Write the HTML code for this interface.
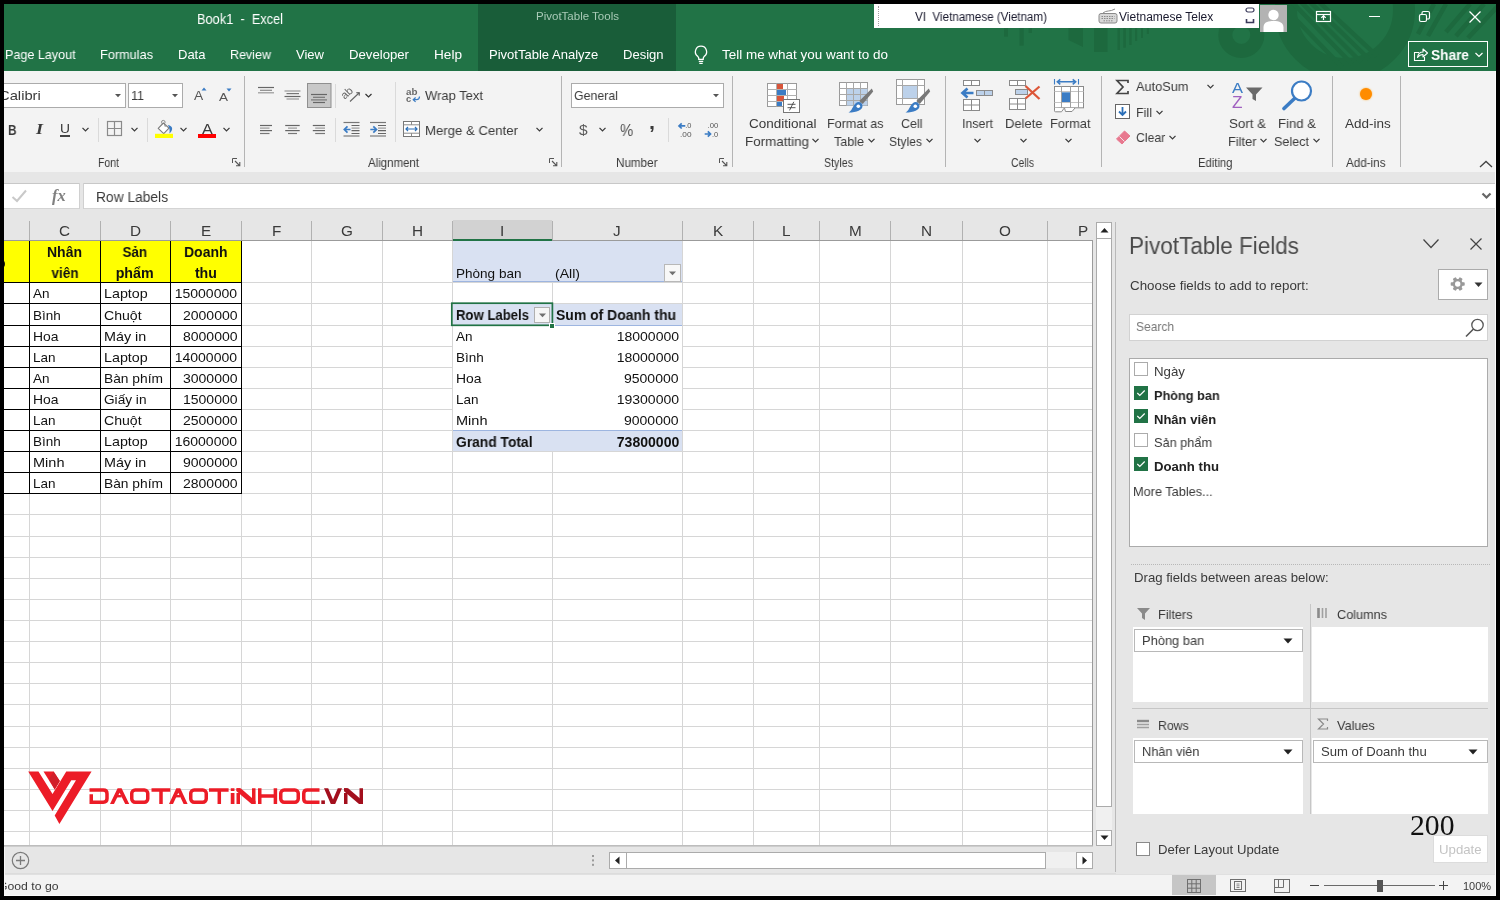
<!DOCTYPE html>
<html lang="en"><head>
<meta charset="utf-8">
<title>Book1 - Excel</title>
<style>
html,body{margin:0;padding:0;}
body{width:1500px;height:900px;overflow:hidden;background:#000;position:relative;font-family:"Liberation Sans",sans-serif;color:#262626;}
div,span,svg{box-sizing:border-box;}
.abs{position:absolute;}
.t{position:absolute;white-space:nowrap;line-height:1;font-size:13px;will-change:transform;}
.serif{font-family:"Liberation Serif",serif;}
.b{font-weight:bold;}
.w{color:#fff;}
#win{position:absolute;left:4px;top:4px;width:1492px;height:892px;background:#e6e6e6;overflow:hidden;}
#titlebar{position:absolute;left:4px;top:4px;width:1492px;height:67px;background:#217346;overflow:hidden;}
#ribbon{position:absolute;left:4px;top:71px;width:1492px;height:101px;background:#f3f3f3;}
#fbar{position:absolute;left:4px;top:183px;width:1491px;height:26px;background:#fff;border-top:1px solid #c8c8c8;border-bottom:1px solid #d4d4d4;}
#colhdr{position:absolute;left:4px;top:220px;width:1089px;height:21px;background:#e6e6e6;border-bottom:1px solid #9b9b9b;}
#grid{position:absolute;left:4px;top:241px;width:1089px;height:605px;background:#fff;overflow:hidden;border-right:1px solid #9b9b9b;border-bottom:1px solid #bdbdbd;}
#tabbar{position:absolute;left:4px;top:846px;width:1112px;height:28px;background:#e6e6e6;border-bottom:1px solid #dcdcdc;}
#status{position:absolute;left:4px;top:874px;width:1492px;height:22px;background:#f3f3f3;border-top:1px solid #e0e0e0;}
#panel{position:absolute;left:1115px;top:209px;width:381px;height:663px;background:#e6e6e6;}
.gl{position:absolute;background:#d6d6d6;}
.sep{position:absolute;width:1px;background:#b4b4b4;}
.sep2{position:absolute;width:1px;background:#dadada;}
.cell{position:absolute;}
</style>
</head>
<body>
<div id="win"></div>
<div id="titlebar">
  <svg class="abs" style="left:0;top:0" width="1492" height="67" viewBox="4 4 1492 67">
    <g fill="none" stroke="#1d693e">
      <circle cx="1241.300" cy="35" r="16" stroke-width="14"></circle>
      <circle cx="1345" cy="10" r="59" stroke-width="22"></circle>
    </g>
    <g stroke="#1d693e" stroke-width="4.500">
      <path d="M1290 0 L1352 64 M1299 0 L1361 62 M1308 0 L1369 59 M1317 0 L1377 56 M1281 4 L1342 67"></path>
      <path d="M1434 4 L1418 34 M1446 4 L1428 36 M1470 4 L1446 32 M1484 4 L1456 36 M1498 6 L1468 38"></path>
    </g>
    <g fill="#1d693e">
      <rect x="1004" y="28" width="4" height="8.600"></rect>
      <rect x="1019.500" y="28" width="4.200" height="17.600"></rect>
      <rect x="1028.600" y="28" width="3.400" height="5"></rect>
      <polygon points="1068.500,28 1083,28 1083,47 1068.500,40"></polygon>
      <rect x="1094" y="28" width="13.500" height="24"></rect>
      <rect x="1117.500" y="28" width="2.500" height="22"></rect>
      <rect x="1123.300" y="28" width="2.500" height="19.700"></rect>
      <rect x="1129.300" y="28" width="2.300" height="17"></rect>
      <rect x="1135" y="28" width="2.200" height="13"></rect>
      <rect x="1141" y="28" width="2" height="10"></rect>
      <rect x="1146.800" y="28" width="2" height="6"></rect>
    </g>
  </svg>
  <div class="abs" style="left:474px;top:0;width:198px;height:67px;background:#195d39"></div>
</div>
<span class="t w" style="font-size: 14px; left: 196.5px; top: 12.15px; transform: scaleX(0.9134); transform-origin: 0px 50%;">Book1&nbsp; -&nbsp; Excel</span>
<span class="t" style="color: rgb(169, 202, 183); font-size: 11.5px; left: 535.5px; top: 11.47px; transform: scaleX(1.0011); transform-origin: 0px 50%;">PivotTable Tools</span>
<span class="t w" style="font-size: 13px; left: 4.8px; top: 47.7px; transform: scaleX(0.9655); transform-origin: 0px 50%;">Page Layout</span>
<span class="t w" style="font-size: 13px; left: 99.7px; top: 47.7px; transform: scaleX(0.9781); transform-origin: 0px 50%;">Formulas</span>
<span class="t w" style="font-size: 13px; left: 177.6px; top: 47.7px; transform: scaleX(0.9975); transform-origin: 0px 50%;">Data</span>
<span class="t w" style="font-size: 13px; left: 230.4px; top: 47.7px; transform: scaleX(0.9619); transform-origin: 0px 50%;">Review</span>
<span class="t w" style="font-size: 13px; left: 296px; top: 47.7px; transform: scaleX(1.0017); transform-origin: 0px 50%;">View</span>
<span class="t w" style="font-size: 13px; left: 349.3px; top: 47.7px; transform: scaleX(1.0124); transform-origin: 0px 50%;">Developer</span>
<span class="t w" style="font-size: 13px; left: 434.3px; top: 47.7px; transform: scaleX(1.0467); transform-origin: 0px 50%;">Help</span>
<span class="t w" style="font-size: 13px; left: 489px; top: 47.7px; transform: scaleX(1.0016); transform-origin: 0px 50%;">PivotTable Analyze</span>
<span class="t w" style="font-size: 13px; left: 622.7px; top: 47.7px; transform: scaleX(1.0032); transform-origin: 0px 50%;">Design</span>
<span class="t w" style="font-size: 13px; left: 721.7px; top: 47.7px; transform: scaleX(1.0348); transform-origin: 0px 50%;">Tell me what you want to do</span>
<svg class="abs" style="left:692px;top:44px" width="18" height="22" viewBox="0 0 18 22">
  <path d="M9 2.2 a5.6 5.6 0 0 0 -3.2 10.2 c0.7 0.6 1 1.3 1 2.3 v0.6 h4.4 v-0.6 c0 -1 0.3 -1.7 1 -2.3 A5.6 5.6 0 0 0 9 2.2 z" fill="none" stroke="#fff" stroke-width="1.3"></path>
  <path d="M6.8 17.3 h4.4 M7.3 19.3 h3.4" stroke="#fff" stroke-width="1.2"></path>
</svg>
<!-- language bar -->
<div class="abs" style="left:874px;top:4px;width:385px;height:24px;background:#fff;"></div>
<div class="abs" style="left:878px;top:6px;width:1px;height:20px;border-left:1px dotted #a0a0a0"></div>
<span class="t" style="color: rgb(26, 26, 46); font-size: 12px; left: 915px; top: 10.84px; transform: scaleX(0.9685); transform-origin: 0px 50%;">VI&nbsp; Vietnamese (Vietnam)</span>
<svg class="abs" style="left:1098px;top:8px" width="20" height="16" viewBox="0 0 20 16">
  <path d="M5 5 C8 2 12 4 17 1" fill="none" stroke="#8a8a8a" stroke-width="1"></path>
  <rect x="1" y="5.5" width="18" height="9.5" rx="2" fill="#d8d8d8" stroke="#8a8a8a"></rect>
  <path d="M3.5 8.5 h13 M3.5 10.5 h13 M5.5 12.8 h9" stroke="#8a8a8a" stroke-width="1" stroke-dasharray="1.5 1"></path>
</svg>
<span class="t" style="color: rgb(26, 26, 46); font-size: 12px; left: 1119px; top: 10.84px; transform: scaleX(0.9969); transform-origin: 0px 50%;">Vietnamese Telex</span>
<svg class="abs" style="left:1244px;top:6px" width="12" height="20" viewBox="0 0 12 20">
  <rect x="2" y="2" width="8" height="4" rx="2" fill="#fff" stroke="#3a3a5a" stroke-width="1.2"></rect>
  <path d="M2.5 13 v3.5 h7 v-3.5" fill="none" stroke="#3a3a5a" stroke-width="1.6"></path>
</svg>
<!-- avatar -->
<div class="abs" style="left:1260px;top:5px;width:27px;height:27px;background:#b3b3b3;overflow:hidden">
  <svg width="27" height="27" viewBox="0 0 27 27"><circle cx="13.5" cy="10" r="5.2" fill="#fff"></circle><path d="M3.5 27 v-4.5 c0 -5 4 -6.5 10 -6.5 s10 1.500 10 6.500 V27 z" fill="#fff"></path></svg>
</div>
<!-- window controls -->
<svg class="abs" style="left:1315px;top:9px" width="18" height="16" viewBox="0 0 18 16">
  <rect x="1.5" y="2.500" width="14" height="10" fill="none" stroke="#fff" stroke-width="1.2"></rect>
  <path d="M1.5 5.5 h14" stroke="#fff" stroke-width="1.200"></path>
  <path d="M8.5 11 v-4 M6.3 8.800 l2.200 -2.200 l2.200 2.200" fill="none" stroke="#fff" stroke-width="1.2"></path>
</svg>
<div class="abs" style="left:1369px;top:16px;width:11px;height:1px;background:#fff"></div>
<svg class="abs" style="left:1417px;top:9px" width="16" height="16" viewBox="0 0 16 16">
  <rect x="2.500" y="5.500" width="7" height="7" rx="1.5" fill="none" stroke="#fff" stroke-width="1.2"></rect>
  <path d="M5 5 v-1 a1.500 1.500 0 0 1 1.500 -1.500 h4.500 a1.500 1.500 0 0 1 1.500 1.500 v4.500 a1.500 1.500 0 0 1 -1.500 1.500 h-1" fill="none" stroke="#fff" stroke-width="1.2"></path>
</svg>
<svg class="abs" style="left:1468px;top:10px" width="14" height="14" viewBox="0 0 14 14">
  <path d="M1.500 1.500 L12.500 12.500 M12.500 1.500 L1.500 12.500" stroke="#fff" stroke-width="1.3"></path>
</svg>
<!-- share -->
<div class="abs" style="left:1408px;top:41px;width:80px;height:26px;border:1px solid #fff;"></div>
<svg class="abs" style="left:1412px;top:46px" width="18" height="17" viewBox="0 0 18 17">
  <path d="M7 6.500 H2.500 V14.500 H12.500 V11" fill="none" stroke="#fff" stroke-width="1.1"></path>
  <path d="M5.500 11.500 C6 8 8.500 6 11 6 V3 L15.500 7 L11 11 V8.500 C9 8.500 7 9.500 5.500 11.500 z" fill="none" stroke="#fff" stroke-width="1.1" stroke-linejoin="round"></path>
</svg>
<span class="t w b" style="font-size: 14px; left: 1431px; top: 47.65px; transform: scaleX(0.9763); transform-origin: 0px 50%;">Share</span>
<svg class="abs" style="left:1474px;top:51px" width="10" height="8" viewBox="0 0 10 8"><path d="M1.500 2 L5 5.500 L8.500 2" fill="none" stroke="#fff" stroke-width="1.2"></path></svg>
<div id="ribbon"></div>
<!-- group separators -->
<div class="sep" style="left:244px;top:76px;height:91px"></div>
<div class="sep" style="left:561px;top:76px;height:91px"></div>
<div class="sep" style="left:732px;top:76px;height:91px"></div>
<div class="sep" style="left:945px;top:76px;height:91px"></div>
<div class="sep" style="left:1101px;top:76px;height:91px"></div>
<div class="sep" style="left:1332px;top:76px;height:91px"></div>
<div class="sep" style="left:1400px;top:76px;height:91px"></div>
<!-- small separators -->
<div class="sep2" style="left:98px;top:118px;height:24px"></div>
<div class="sep2" style="left:147px;top:118px;height:24px"></div>
<div class="sep2" style="left:335px;top:84px;height:24px"></div>
<div class="sep2" style="left:335px;top:118px;height:24px"></div>
<div class="sep2" style="left:395px;top:82px;height:60px"></div>
<div class="sep2" style="left:668px;top:118px;height:24px"></div>

<!-- FONT GROUP -->
<div class="abs" style="left:-2px;top:83px;width:128px;height:25px;background:#fff;border:1px solid #ababab"></div>
<span class="t" style="color: rgb(58, 58, 58); font-size: 13.5px; left: -1.5px; top: 88.57px; transform: scaleX(1.0924); transform-origin: 0px 50%;">Calibri</span>
<svg class="abs" style="left:114px;top:93px" width="8" height="5" viewBox="0 0 8 5"><path d="M1 1 h6 l-3 3.300 z" fill="#555"></path></svg>
<div class="abs" style="left:128px;top:83px;width:55px;height:25px;background:#fff;border:1px solid #ababab"></div>
<span class="t" style="color: rgb(58, 58, 58); font-size: 13.5px; left: 131px; top: 88.57px; transform: scaleX(0.9275); transform-origin: 0px 50%;">11</span>
<svg class="abs" style="left:171px;top:93px" width="8" height="5" viewBox="0 0 8 5"><path d="M1 1 h6 l-3 3.300 z" fill="#555"></path></svg>
<span class="t" style="color: rgb(85, 85, 85); font-size: 13.3px; left: 193.5px; top: 89.04px; transform: scaleX(1.0366); transform-origin: 0px 50%;">A</span>
<svg class="abs" style="left:200.500px;top:87px" width="6" height="4" viewBox="0 0 6 4"><path d="M0.500 3.500 L3 0.500 L5.500 3.500 z" fill="#3b7cc4"></path></svg>
<span class="t" style="color: rgb(85, 85, 85); font-size: 11.7px; left: 219px; top: 90.6px; transform: scaleX(1.1543); transform-origin: 0px 50%;">A</span>
<svg class="abs" style="left:225.500px;top:88px" width="6" height="4" viewBox="0 0 6 4"><path d="M0.500 0.500 L3 3.500 L5.500 0.500 z" fill="#3b7cc4"></path></svg>

<span class="t b" style="color: rgb(58, 58, 58); font-size: 14px; left: 7.5px; top: 122.65px; transform: scaleX(0.8395); transform-origin: 0px 50%;">B</span>
<span class="t serif" style="color: rgb(58, 58, 58); font-style: italic; font-weight: bold; font-size: 15px; left: 36px; top: 122px; transform: scaleX(1.1979); transform-origin: 0px 50%;">I</span>
<span class="t" style="color: rgb(58, 58, 58); font-size: 13.5px; left: 60px; top: 122.07px; transform: scaleX(1.0256); transform-origin: 0px 50%;">U</span>
<div class="abs" style="left:60px;top:135px;width:10px;height:1.500px;background:#444"></div>
<svg class="abs" style="left:81px;top:126px" width="9" height="6" viewBox="0 0 9 6"><path d="M1.500 1.900 L4.500 4.900 L7.500 1.900" fill="none" stroke="#3a3a3a" stroke-width="1.300"></path></svg>
<svg class="abs" style="left:106px;top:120px" width="17" height="17" viewBox="0 0 17 17"><rect x="1.500" y="1.500" width="14" height="14" fill="none" stroke="#8a8a8a" stroke-width="1.200"></rect><path d="M8.500 1.500 v14 M1.500 8.500 h14" stroke="#8a8a8a" stroke-width="1.200"></path></svg>
<svg class="abs" style="left:130px;top:126px" width="9" height="6" viewBox="0 0 9 6"><path d="M1.500 1.900 L4.500 4.900 L7.500 1.900" fill="none" stroke="#3a3a3a" stroke-width="1.300"></path></svg>
<!-- fill bucket -->
<svg class="abs" style="left:155px;top:119px" width="19" height="20" viewBox="0 0 19 20">
  <circle cx="8.300" cy="3.200" r="1.800" fill="none" stroke="#8a8a8a" stroke-width="1"></circle>
  <path d="M8.400 4 L14 9.200 L8.700 14.600 L3.200 9.300 z" fill="#fff" stroke="#7c7c7c" stroke-width="1.100" stroke-linejoin="round"></path>
  <path d="M9.300 4.500 L10.300 7.800" fill="none" stroke="#8a8a8a" stroke-width="1"></path>
  <path d="M12.800 6 C15.500 6.500 17.600 8 17.100 10.200 C16.600 12.200 15.600 13.600 14.400 14.400 C14.900 11.500 14.600 8.500 12.800 6 z" fill="#3b7cc4"></path>
  <rect x="0" y="14.800" width="18" height="4.200" fill="#ffff00"></rect>
</svg>
<svg class="abs" style="left:179px;top:126px" width="9" height="6" viewBox="0 0 9 6"><path d="M1.500 1.900 L4.500 4.900 L7.500 1.900" fill="none" stroke="#3a3a3a" stroke-width="1.300"></path></svg>
<span class="t" style="color: rgb(58, 58, 58); font-size: 15px; left: 201.7px; top: 120.5px; transform: scaleX(1.0783); transform-origin: 0px 50%;">A</span>
<div class="abs" style="left:198px;top:134px;width:18px;height:4px;background:#ff0000"></div>
<svg class="abs" style="left:222px;top:126px" width="9" height="6" viewBox="0 0 9 6"><path d="M1.500 1.900 L4.500 4.900 L7.500 1.900" fill="none" stroke="#3a3a3a" stroke-width="1.300"></path></svg>
<span class="t" style="color: rgb(58, 58, 58); font-size: 12px; left: 97.5px; top: 156.84px; transform: scaleX(0.8744); transform-origin: 0px 50%;">Font</span>
<svg class="abs" style="left:232px;top:158px" width="9" height="9" viewBox="0 0 9 9"><path d="M0.500 5 V0.500 H5" fill="none" stroke="#555" stroke-width="1"></path><path d="M3 3 L7.500 7.500 M7.800 4 V7.800 H4" fill="none" stroke="#555" stroke-width="1.100"></path></svg>

<!-- ALIGNMENT GROUP -->
<svg class="abs" style="left:250px;top:76px" width="150" height="70" viewBox="250 76 150 70">
  <g stroke-width="1.200" fill="none">
    <path d="M258 87.500 h16" stroke="#666"></path><path d="M260 90.300 h12" stroke="#8a8a8a"></path><path d="M258 92.800 h16" stroke="#999"></path>
    <path d="M284.500 91 h16" stroke="#999"></path><path d="M286.500 93.600 h12.500" stroke="#777"></path><path d="M284.500 96.500 h16" stroke="#666"></path><path d="M286.500 99 h12.500" stroke="#999"></path>
    <rect x="307.500" y="83.500" width="23.500" height="24" fill="#c8c8c8" stroke="#8f8f8f" stroke-width="1"></rect>
    <path d="M311 94.500 h16" stroke="#666"></path><path d="M313 97.300 h12" stroke="#777"></path><path d="M311 99.900 h16" stroke="#777"></path><path d="M313 102.500 h12" stroke="#666"></path>
    <path d="M260 125.500 h12" stroke="#666"></path><path d="M260 128.100 h9.500" stroke="#999"></path><path d="M260 130.600 h12" stroke="#666"></path><path d="M260 133.500 h9.500" stroke="#777"></path>
    <path d="M285.200 125.500 h14.500" stroke="#666"></path><path d="M288 128.100 h9" stroke="#999"></path><path d="M285.200 130.600 h14.500" stroke="#666"></path><path d="M288 133.500 h9" stroke="#777"></path>
    <path d="M312.800 125.500 h12.200" stroke="#666"></path><path d="M315.200 128.100 h9.800" stroke="#999"></path><path d="M312.800 130.600 h12.200" stroke="#666"></path><path d="M315.200 133.500 h9.800" stroke="#777"></path>
    <path d="M343.500 122.500 h16" stroke="#777"></path><path d="M351.500 125.500 h8 M351.500 130.600 h8 M351.500 133.500 h8" stroke="#666"></path><path d="M351.500 128.100 h8" stroke="#999"></path><path d="M343.500 136 h16" stroke="#999" stroke-width="1.600"></path>
    <path d="M370 122.500 h16" stroke="#777"></path><path d="M378 125.500 h8 M378 130.600 h8 M378 133.500 h8" stroke="#666"></path><path d="M378 128.100 h8" stroke="#999"></path><path d="M370 136 h16" stroke="#999" stroke-width="1.600"></path>
    <path d="M350.500 129.500 H344.500 M347.500 126.300 L344.300 129.500 L347.500 132.700" stroke="#3b7cc4" stroke-width="1.700"></path>
    <path d="M370.300 129.500 H376.300 M373.300 126.300 L376.500 129.500 L373.300 132.700" stroke="#3b7cc4" stroke-width="1.700"></path>
    <path d="M350 101.500 L359 93 M359.500 92.500 l-3.300 0.300 M359.500 92.500 l-0.300 3.300" stroke="#666" stroke-width="1.100"></path>
    <path d="M365.500 94 L368.500 97 L371.500 94" stroke="#333" stroke-width="1.200"></path>
  </g>
  <text x="344.800" y="99.800" font-family="Liberation Sans, sans-serif" font-size="11" fill="#666" transform="rotate(-43 344.800 99.800)">ab</text>
</svg>
<!-- wrap text -->
<svg class="abs" style="left:404px;top:86px" width="18" height="18" viewBox="0 0 18 18">
  <text x="2" y="9.100" font-family="Liberation Sans, sans-serif" font-size="8.500" font-weight="bold" fill="#6a6a6a" textLength="11.500" lengthAdjust="spacingAndGlyphs">ab</text>
  <text x="2" y="15.600" font-family="Liberation Sans, sans-serif" font-size="8.500" font-weight="bold" fill="#6a6a6a" textLength="5.200" lengthAdjust="spacingAndGlyphs">c</text>
  <path d="M15.500 10.600 C15.500 13 14.500 13.700 12.500 13.700 H9.500 M11.600 11.500 L9.200 13.700 L11.600 15.900" fill="none" stroke="#3b7cc4" stroke-width="1.200"></path>
</svg>
<span class="t" style="color: rgb(58, 58, 58); font-size: 13.5px; left: 425px; top: 89.07px; transform: scaleX(0.9622); transform-origin: 0px 50%;">Wrap Text</span>
<svg class="abs" style="left:402px;top:120px" width="19" height="18" viewBox="0 0 19 18">
  <rect x="1.500" y="1.500" width="16" height="15" fill="#fff" stroke="#777" stroke-width="1"></rect>
  <path d="M1.500 4.800 h16 M1.500 13.200 h16 M9.500 1.500 v3.300 M9.500 13.200 v3.300" stroke="#8a8a8a" stroke-width="1"></path>
  <path d="M4 9 h11 M6 7 L4 9 L6 11 M13 7 L15 9 L13 11" fill="none" stroke="#2b6fb8" stroke-width="1.200"></path>
</svg>
<span class="t" style="color: rgb(58, 58, 58); font-size: 13.5px; left: 425px; top: 123.57px; transform: scaleX(0.9759); transform-origin: 0px 50%;">Merge &amp; Center</span>
<svg class="abs" style="left:535px;top:126px" width="9" height="6" viewBox="0 0 9 6"><path d="M1.500 1.900 L4.500 4.900 L7.500 1.900" fill="none" stroke="#3a3a3a" stroke-width="1.300"></path></svg>
<span class="t" style="color: rgb(58, 58, 58); font-size: 12px; left: 367.5px; top: 156.84px; transform: scaleX(0.9555); transform-origin: 0px 50%;">Alignment</span>
<svg class="abs" style="left:549px;top:158px" width="9" height="9" viewBox="0 0 9 9"><path d="M0.500 5 V0.500 H5" fill="none" stroke="#555" stroke-width="1"></path><path d="M3 3 L7.500 7.500 M7.800 4 V7.800 H4" fill="none" stroke="#555" stroke-width="1.100"></path></svg>

<!-- NUMBER GROUP -->
<div class="abs" style="left:571px;top:83px;width:153px;height:25px;background:#fff;border:1px solid #ababab"></div>
<span class="t" style="color: rgb(58, 58, 58); font-size: 13.5px; left: 573.5px; top: 88.57px; transform: scaleX(0.9161); transform-origin: 0px 50%;">General</span>
<svg class="abs" style="left:712px;top:93px" width="8" height="5" viewBox="0 0 8 5"><path d="M1 1 h6 l-3 3.300 z" fill="#555"></path></svg>
<span class="t" style="color: rgb(90, 90, 90); font-size: 15.5px; left: 578.7px; top: 122.18px; transform: scaleX(0.9855); transform-origin: 0px 50%;">$</span>
<svg class="abs" style="left:598px;top:126px" width="9" height="6" viewBox="0 0 9 6"><path d="M1.500 1.900 L4.500 4.900 L7.500 1.900" fill="none" stroke="#3a3a3a" stroke-width="1.300"></path></svg>
<span class="t" style="color: rgb(85, 85, 85); font-size: 16.5px; left: 619.5px; top: 121.53px; transform: scaleX(0.8997); transform-origin: 0px 50%;">%</span>
<span class="t b" style="color: rgb(58, 58, 58); font-size: 20px; left: 648.5px; top: 112.37px; transform: scaleX(1.0787); transform-origin: 0px 50%;">,</span>
<svg class="abs" style="left:677px;top:121px" width="17" height="17" viewBox="0 0 17 17">
  <path d="M8.300 4.900 H2 M4.700 2.300 L2 4.900 L4.700 7.500" fill="none" stroke="#3b7cc4" stroke-width="1.700"></path>
  <text x="8.300" y="7.400" font-family="Liberation Sans, sans-serif" font-size="7.800" fill="#555" textLength="6.200" lengthAdjust="spacingAndGlyphs">.0</text>
  <text x="3" y="15.600" font-family="Liberation Sans, sans-serif" font-size="7.800" fill="#555" textLength="11.500" lengthAdjust="spacingAndGlyphs">.00</text>
</svg>
<svg class="abs" style="left:703px;top:121px" width="17" height="17" viewBox="0 0 17 17">
  <text x="4.500" y="7.400" font-family="Liberation Sans, sans-serif" font-size="7.800" fill="#555" textLength="10.700" lengthAdjust="spacingAndGlyphs">.00</text>
  <path d="M1.700 13 H7.400 M4.800 10.400 L7.500 13 L4.800 15.600" fill="none" stroke="#3b7cc4" stroke-width="1.700"></path>
  <text x="8.900" y="15.600" font-family="Liberation Sans, sans-serif" font-size="7.800" fill="#555" textLength="6.200" lengthAdjust="spacingAndGlyphs">.0</text>
</svg>
<span class="t" style="color: rgb(58, 58, 58); font-size: 12px; left: 616px; top: 156.84px; transform: scaleX(0.9722); transform-origin: 0px 50%;">Number</span>
<svg class="abs" style="left:719px;top:158px" width="9" height="9" viewBox="0 0 9 9"><path d="M0.500 5 V0.500 H5" fill="none" stroke="#555" stroke-width="1"></path><path d="M3 3 L7.500 7.500 M7.800 4 V7.800 H4" fill="none" stroke="#555" stroke-width="1.100"></path></svg>
<!-- STYLES GROUP -->
<svg class="abs" style="left:766px;top:82px" width="36" height="32" viewBox="0 0 36 32">
  <rect x="1.500" y="1.500" width="29" height="23" fill="#fff" stroke="#9a9a9a"></rect>
  <path d="M1.500 7.500 h29 M1.500 13.500 h29 M1.500 19.500 h29 M10.500 1.500 v23 M21.500 1.500 v23" stroke="#b0b0b0" stroke-width="1"></path>
  <rect x="11" y="2" width="6" height="5" fill="#d8553a"></rect>
  <rect x="11" y="8" width="9" height="5" fill="#3b7cc4"></rect>
  <rect x="11" y="14" width="7" height="5" fill="#d8553a"></rect>
  <rect x="11" y="20" width="5" height="4" fill="#3b7cc4"></rect>
  <rect x="17.500" y="17.500" width="16" height="13" fill="#fff" stroke="#777"></rect>
  <path d="M21.500 22.300 h8 M21.500 25.700 h8 M27.800 19.800 l-4.300 8.600" stroke="#444" stroke-width="0.900"></path>
</svg>
<span class="t" style="color: rgb(58, 58, 58); font-size: 13.5px; left: 748.5px; top: 117.27px; transform: scaleX(0.9993); transform-origin: 0px 50%;">Conditional</span>
<span class="t" style="color: rgb(58, 58, 58); font-size: 13.5px; left: 744.5px; top: 134.57px; transform: scaleX(0.9918); transform-origin: 0px 50%;">Formatting</span>
<svg class="abs" style="left:811px;top:137px" width="9" height="6" viewBox="0 0 9 6"><path d="M1.500 1.900 L4.500 4.900 L7.500 1.900" fill="none" stroke="#3a3a3a" stroke-width="1.300"></path></svg>

<svg class="abs" style="left:838px;top:81px" width="38" height="33" viewBox="0 0 38 33">
  <rect x="1.500" y="1.500" width="28" height="23" fill="#fff" stroke="#9a9a9a"></rect>
  <rect x="8.500" y="7.500" width="21" height="17" fill="#bcd1ea"></rect>
  <path d="M1.500 7.500 h28 M1.500 13.500 h28 M1.500 19.500 h28 M8.500 1.500 v23 M15.500 1.500 v23 M22.500 1.500 v23" stroke="#a8a8a8" stroke-width="1"></path>
  <path d="M33.800 7.600 L35.200 10.400 L24.700 22.900 L21.300 20.100 z" fill="#787878"></path>
  <path d="M10.500 31.500 C14 30 14.500 25 18 22 C20.500 20 24.500 21.500 24.500 25 C24.500 29 19 31.500 10.500 31.500 z" fill="#3b7cc4"></path>
  <circle cx="20.300" cy="25.300" r="1.800" fill="#fff"></circle>
</svg>
<span class="t" style="color: rgb(58, 58, 58); font-size: 13.5px; left: 826.7px; top: 117.27px; transform: scaleX(0.9298); transform-origin: 0px 50%;">Format as</span>
<span class="t" style="color: rgb(58, 58, 58); font-size: 13.5px; left: 833.7px; top: 134.57px; transform: scaleX(0.9293); transform-origin: 0px 50%;">Table</span>
<svg class="abs" style="left:867px;top:137px" width="9" height="6" viewBox="0 0 9 6"><path d="M1.500 1.900 L4.500 4.900 L7.500 1.900" fill="none" stroke="#3a3a3a" stroke-width="1.300"></path></svg>

<svg class="abs" style="left:895px;top:78px" width="38" height="36" viewBox="0 0 38 36">
  <rect x="1.500" y="1.500" width="28" height="25" fill="#fff" stroke="#9a9a9a"></rect>
  <path d="M1.500 7.500 h28 M1.500 20.500 h28 M7.500 1.500 v25 M22.500 1.500 v25" stroke="#a8a8a8" stroke-width="1"></path>
  <rect x="8" y="8" width="14" height="12" fill="#bcd1ea"></rect>
  <path d="M33.800 10.600 L35.200 13.400 L24.700 25.900 L21.300 23.100 z" fill="#787878"></path>
  <path d="M10.500 34.500 C14 33 14.500 28 18 25 C20.500 23 24.500 24.500 24.500 28 C24.500 32 19 34.500 10.500 34.500 z" fill="#3b7cc4"></path>
  <circle cx="20.300" cy="28.300" r="1.800" fill="#fff"></circle>
</svg>
<span class="t" style="color: rgb(58, 58, 58); font-size: 13.5px; left: 900.5px; top: 117.27px; transform: scaleX(0.9241); transform-origin: 0px 50%;">Cell</span>
<span class="t" style="color: rgb(58, 58, 58); font-size: 13.5px; left: 889px; top: 134.57px; transform: scaleX(0.8976); transform-origin: 0px 50%;">Styles</span>
<svg class="abs" style="left:925px;top:137px" width="9" height="6" viewBox="0 0 9 6"><path d="M1.500 1.900 L4.500 4.900 L7.500 1.900" fill="none" stroke="#3a3a3a" stroke-width="1.300"></path></svg>
<span class="t" style="color: rgb(58, 58, 58); font-size: 12px; left: 823.7px; top: 156.84px; transform: scaleX(0.8872); transform-origin: 0px 50%;">Styles</span>

<!-- CELLS GROUP -->
<svg class="abs" style="left:960px;top:79px" width="35" height="33" viewBox="0 0 35 33">
  <rect x="3.500" y="1.500" width="16" height="5" fill="#fff" stroke="#8a8a8a"></rect><path d="M11.500 1.500 v5" stroke="#8a8a8a"></path>
  <rect x="16.500" y="11.500" width="16" height="5" fill="#bcd1ea" stroke="#8a8a8a"></rect><path d="M24.500 11.500 v5" stroke="#8a8a8a"></path>
  <path d="M13.500 14 H3 M7.500 9.500 L2.500 14 L7.500 18.500" fill="none" stroke="#3b7cc4" stroke-width="2.700"></path>
  <rect x="3.500" y="20.500" width="16" height="11" fill="#fff" stroke="#8a8a8a"></rect><path d="M11.500 20.500 v11 M3.500 26 h16" stroke="#8a8a8a"></path>
</svg>
<span class="t" style="color: rgb(58, 58, 58); font-size: 13.5px; left: 962px; top: 117.27px; transform: scaleX(0.9181); transform-origin: 0px 50%;">Insert</span>
<svg class="abs" style="left:973px;top:137px" width="9" height="6" viewBox="0 0 9 6"><path d="M1.500 1.900 L4.500 4.900 L7.500 1.900" fill="none" stroke="#3a3a3a" stroke-width="1.300"></path></svg>

<svg class="abs" style="left:1007px;top:79px" width="35" height="33" viewBox="0 0 35 33">
  <rect x="2.500" y="1.500" width="16" height="5" fill="#fff" stroke="#8a8a8a"></rect><path d="M10.500 1.500 v5" stroke="#8a8a8a"></path>
  <rect x="8.500" y="10.500" width="12" height="5" fill="#bcd1ea" stroke="#8a8a8a"></rect>
  <rect x="2.500" y="19.500" width="16" height="11" fill="#fff" stroke="#8a8a8a"></rect><path d="M10.500 19.500 v11 M2.500 25 h16" stroke="#8a8a8a"></path>
  <path d="M18.500 7 L32.500 20 M32.500 7.500 L18.500 19.500" stroke="#dc5638" stroke-width="2.300"></path>
</svg>
<span class="t" style="color: rgb(58, 58, 58); font-size: 13.5px; left: 1005px; top: 117.27px; transform: scaleX(0.9608); transform-origin: 0px 50%;">Delete</span>
<svg class="abs" style="left:1019px;top:137px" width="9" height="6" viewBox="0 0 9 6"><path d="M1.500 1.900 L4.500 4.900 L7.500 1.900" fill="none" stroke="#3a3a3a" stroke-width="1.300"></path></svg>

<svg class="abs" style="left:1052px;top:78px" width="34" height="35" viewBox="0 0 34 35">
  <path d="M2.500 1 v5.500 M26.500 1 v5.500" fill="none" stroke="#3b7cc4" stroke-width="1.100"></path>
  <path d="M5.500 3.800 h18 M8.300 1.300 L5.300 3.800 L8.300 6.300 M20.700 1.300 L23.700 3.800 L20.700 6.300" fill="none" stroke="#3b7cc4" stroke-width="1.500"></path>
  <rect x="2.500" y="8.500" width="29" height="21.300" fill="#fff" stroke="#8a8a8a"></rect>
  <path d="M2.500 13.500 h29 M2.500 24.500 h29" stroke="#c4c4c4"></path>
  <path d="M9.500 8.500 v21.300 M18.500 8.500 v21.300 M26.500 8.500 v21.300" stroke="#a0a0a0"></path>
  <rect x="10" y="14.300" width="8" height="9.700" fill="#3b7cc4"></rect>
  <path d="M2.500 29.800 v3 q0 1 1 1 h6 l2.500 -3.500 M12.500 30 l1 3.500 h6.500 l3 -3.500" fill="#fff" stroke="#8a8a8a"></path>
</svg>
<span class="t" style="color: rgb(58, 58, 58); font-size: 13.5px; left: 1049.5px; top: 117.27px; transform: scaleX(0.947); transform-origin: 0px 50%;">Format</span>
<svg class="abs" style="left:1064px;top:137px" width="9" height="6" viewBox="0 0 9 6"><path d="M1.500 1.900 L4.500 4.900 L7.500 1.900" fill="none" stroke="#3a3a3a" stroke-width="1.300"></path></svg>
<span class="t" style="color: rgb(58, 58, 58); font-size: 12px; left: 1010.5px; top: 156.84px; transform: scaleX(0.8623); transform-origin: 0px 50%;">Cells</span>

<!-- EDITING GROUP -->
<svg class="abs" style="left:1115px;top:79px" width="15" height="16" viewBox="0 0 15 16"><path d="M13 4 V1.500 H2 L8 8 L2 14.500 H13 V12" fill="none" stroke="#444" stroke-width="1.700" stroke-linejoin="miter"></path></svg>
<span class="t" style="color: rgb(58, 58, 58); font-size: 13.5px; left: 1135.5px; top: 79.87px; transform: scaleX(0.9454); transform-origin: 0px 50%;">AutoSum</span>
<svg class="abs" style="left:1206px;top:83px" width="9" height="6" viewBox="0 0 9 6"><path d="M1.500 1.900 L4.500 4.900 L7.500 1.900" fill="none" stroke="#3a3a3a" stroke-width="1.300"></path></svg>
<svg class="abs" style="left:1114px;top:103px" width="17" height="17" viewBox="0 0 17 17">
  <rect x="1.500" y="1.500" width="14" height="14" fill="#fff" stroke="#666"></rect>
  <path d="M8.500 4 V12 M5 8.500 L8.500 12 L12 8.500" fill="none" stroke="#2b6fb8" stroke-width="1.800"></path>
</svg>
<span class="t" style="color: rgb(58, 58, 58); font-size: 13.5px; left: 1135.5px; top: 105.77px; transform: scaleX(0.9275); transform-origin: 0px 50%;">Fill</span>
<svg class="abs" style="left:1155px;top:109px" width="9" height="6" viewBox="0 0 9 6"><path d="M1.500 1.900 L4.500 4.900 L7.500 1.900" fill="none" stroke="#3a3a3a" stroke-width="1.300"></path></svg>
<svg class="abs" style="left:1114px;top:129px" width="18" height="17" viewBox="0 0 18 17">
  <path d="M10.500 2 L16 7 L8 15 L2.500 10 z" fill="#e8788f" stroke="#e8788f" stroke-linejoin="round"></path>
  <path d="M5.500 7.500 L10.500 12.500" stroke="#f3f3f3" stroke-width="0.900"></path>
</svg>
<span class="t" style="color: rgb(58, 58, 58); font-size: 13.5px; left: 1135.5px; top: 131.07px; transform: scaleX(0.9081); transform-origin: 0px 50%;">Clear</span>
<svg class="abs" style="left:1168px;top:134px" width="9" height="6" viewBox="0 0 9 6"><path d="M1.500 1.900 L4.500 4.900 L7.500 1.900" fill="none" stroke="#3a3a3a" stroke-width="1.300"></path></svg>

<span class="t" style="color: rgb(59, 124, 196); font-size: 15.5px; left: 1232px; top: 80.38px; transform: scaleX(1.0634); transform-origin: 0px 50%;">A</span>
<span class="t" style="color: rgb(160, 96, 192); font-size: 16px; left: 1232px; top: 94.96px; transform: scaleX(1.0735); transform-origin: 0px 50%;">Z</span>
<svg class="abs" style="left:1245px;top:86px" width="19" height="17" viewBox="0 0 19 17"><path d="M1 1.500 H17.500 L11 8.500 V15 L7.500 13 V8.500 z" fill="#6a6a6a"></path></svg>
<span class="t" style="color: rgb(58, 58, 58); font-size: 13.5px; left: 1228.8px; top: 117.27px; transform: scaleX(0.9863); transform-origin: 0px 50%;">Sort &amp;</span>
<span class="t" style="color: rgb(58, 58, 58); font-size: 13.5px; left: 1227.5px; top: 134.57px; transform: scaleX(0.95); transform-origin: 0px 50%;">Filter</span>
<svg class="abs" style="left:1259px;top:137px" width="9" height="6" viewBox="0 0 9 6"><path d="M1.500 1.900 L4.500 4.900 L7.500 1.900" fill="none" stroke="#3a3a3a" stroke-width="1.300"></path></svg>

<svg class="abs" style="left:1281px;top:79px" width="33" height="32" viewBox="0 0 33 32">
  <circle cx="20.500" cy="12" r="9.500" fill="#fff" stroke="#3b7cc4" stroke-width="2.200"></circle>
  <path d="M13.500 19.500 L3 29.500" stroke="#3b7cc4" stroke-width="3.600" stroke-linecap="round"></path>
</svg>
<span class="t" style="color: rgb(58, 58, 58); font-size: 13.5px; left: 1278px; top: 117.27px; transform: scaleX(0.9736); transform-origin: 0px 50%;">Find &amp;</span>
<span class="t" style="color: rgb(58, 58, 58); font-size: 13.5px; left: 1274px; top: 134.57px; transform: scaleX(0.9326); transform-origin: 0px 50%;">Select</span>
<svg class="abs" style="left:1312px;top:137px" width="9" height="6" viewBox="0 0 9 6"><path d="M1.500 1.900 L4.500 4.900 L7.500 1.900" fill="none" stroke="#3a3a3a" stroke-width="1.300"></path></svg>
<span class="t" style="color: rgb(58, 58, 58); font-size: 12px; left: 1198px; top: 156.84px; transform: scaleX(0.94); transform-origin: 0px 50%;">Editing</span>

<!-- ADD-INS -->
<div class="abs" style="left:1360px;top:88px;width:12px;height:12px;border-radius:6px;background:#ff8c00;box-shadow:0 0 2px #ffb040"></div>
<span class="t" style="color: rgb(58, 58, 58); font-size: 13.5px; left: 1344.5px; top: 117.27px; transform: scaleX(0.9939); transform-origin: 0px 50%;">Add-ins</span>
<span class="t" style="color: rgb(58, 58, 58); font-size: 12px; left: 1346px; top: 156.84px; transform: scaleX(0.9708); transform-origin: 0px 50%;">Add-ins</span>
<svg class="abs" style="left:1479px;top:160px" width="14" height="8" viewBox="0 0 14 8"><path d="M1 7 L7 1.500 L13 7" fill="none" stroke="#444" stroke-width="1.300"></path></svg>
<!-- FORMULA BAR -->
<div id="fbar"></div>
<div class="abs" style="left:79px;top:183px;width:5px;height:26px;background:#e6e6e6;border-left:1px solid #d0d0d0;border-right:1px solid #d0d0d0"></div>
<svg class="abs" style="left:11px;top:189px" width="17" height="14" viewBox="0 0 17 14"><path d="M1.500 8 L6 12 L15 1.500" fill="none" stroke="#c9c9c9" stroke-width="2"></path></svg>
<span class="t serif" style="color: rgb(128, 128, 128); font-style: italic; font-weight: bold; font-size: 16.5px; left: 52px; top: 188.25px; transform: scaleX(0.9818); transform-origin: 0px 50%;">fx</span>
<span class="t" style="color: rgb(58, 58, 58); font-size: 14px; left: 96px; top: 190.15px; transform: scaleX(0.9842); transform-origin: 0px 50%;">Row Labels</span>
<svg class="abs" style="left:1481px;top:192px" width="11" height="8" viewBox="0 0 11 8"><path d="M1.500 1.500 L5.500 5.500 L9.500 1.500" fill="none" stroke="#666" stroke-width="2.200"></path></svg>
<!-- COLUMN HEADERS -->
<div id="colhdr"></div>
<div class="abs" style="left:453px;top:220px;width:99px;height:21px;background:#d2d2d2;border-bottom:2px solid #217346"></div>
<div class="abs" style="left:29px;top:221px;width:1px;height:19px;background:#b1b1b1"></div>
<div class="abs" style="left:100px;top:221px;width:1px;height:19px;background:#b1b1b1"></div>
<div class="abs" style="left:170px;top:221px;width:1px;height:19px;background:#b1b1b1"></div>
<div class="abs" style="left:241px;top:221px;width:1px;height:19px;background:#b1b1b1"></div>
<div class="abs" style="left:311px;top:221px;width:1px;height:19px;background:#b1b1b1"></div>
<div class="abs" style="left:382px;top:221px;width:1px;height:19px;background:#b1b1b1"></div>
<div class="abs" style="left:452px;top:221px;width:1px;height:19px;background:#b1b1b1"></div>
<div class="abs" style="left:552px;top:221px;width:1px;height:19px;background:#b1b1b1"></div>
<div class="abs" style="left:682px;top:221px;width:1px;height:19px;background:#b1b1b1"></div>
<div class="abs" style="left:753px;top:221px;width:1px;height:19px;background:#b1b1b1"></div>
<div class="abs" style="left:819px;top:221px;width:1px;height:19px;background:#b1b1b1"></div>
<div class="abs" style="left:890px;top:221px;width:1px;height:19px;background:#b1b1b1"></div>
<div class="abs" style="left:962px;top:221px;width:1px;height:19px;background:#b1b1b1"></div>
<div class="abs" style="left:1047px;top:221px;width:1px;height:19px;background:#b1b1b1"></div>
<span class="t" style="color: rgb(58, 58, 58); font-size: 15.3px; left: 59.27px; top: 223.05px;">C</span>
<span class="t" style="color: rgb(58, 58, 58); font-size: 15.3px; left: 129.67px; top: 223.05px;">D</span>
<span class="t" style="color: rgb(58, 58, 58); font-size: 15.3px; left: 200.7px; top: 223.05px;">E</span>
<span class="t" style="color: rgb(58, 58, 58); font-size: 15.3px; left: 271.52px; top: 223.05px;">F</span>
<span class="t" style="color: rgb(58, 58, 58); font-size: 15.3px; left: 340.85px; top: 223.05px;">G</span>
<span class="t" style="color: rgb(58, 58, 58); font-size: 15.3px; left: 411.67px; top: 223.05px;">H</span>
<span class="t" style="color: rgb(58, 58, 58); font-size: 15.3px; left: 500.07px; top: 223.05px;">I</span>
<span class="t" style="color: rgb(58, 58, 58); font-size: 15.3px; left: 613.37px; top: 223.05px;">J</span>
<span class="t" style="color: rgb(58, 58, 58); font-size: 15.3px; left: 712.9px; top: 223.05px;">K</span>
<span class="t" style="color: rgb(58, 58, 58); font-size: 15.3px; left: 782.24px; top: 223.05px;">L</span>
<span class="t" style="color: rgb(58, 58, 58); font-size: 15.3px; left: 848.83px; top: 223.05px;">M</span>
<span class="t" style="color: rgb(58, 58, 58); font-size: 15.3px; left: 921.27px; top: 223.05px;">N</span>
<span class="t" style="color: rgb(58, 58, 58); font-size: 15.3px; left: 999.25px; top: 223.05px;">O</span>
<span class="t" style="color: rgb(58, 58, 58); font-size: 15.3px; left: 1077.9px; top: 223.05px;">P</span>
<!-- GRID -->
<div id="grid">
<div class="gl" style="left:25px;top:0;width:1px;height:605px"></div>
<div class="gl" style="left:96px;top:0;width:1px;height:605px"></div>
<div class="gl" style="left:166px;top:0;width:1px;height:605px"></div>
<div class="gl" style="left:237px;top:0;width:1px;height:605px"></div>
<div class="gl" style="left:307px;top:0;width:1px;height:605px"></div>
<div class="gl" style="left:378px;top:0;width:1px;height:605px"></div>
<div class="gl" style="left:448px;top:0;width:1px;height:605px"></div>
<div class="gl" style="left:548px;top:0;width:1px;height:605px"></div>
<div class="gl" style="left:678px;top:0;width:1px;height:605px"></div>
<div class="gl" style="left:749px;top:0;width:1px;height:605px"></div>
<div class="gl" style="left:815px;top:0;width:1px;height:605px"></div>
<div class="gl" style="left:886px;top:0;width:1px;height:605px"></div>
<div class="gl" style="left:958px;top:0;width:1px;height:605px"></div>
<div class="gl" style="left:1043px;top:0;width:1px;height:605px"></div>
<div class="gl" style="left:0;top:41px;width:1089px;height:1px"></div>
<div class="gl" style="left:0;top:62px;width:1089px;height:1px"></div>
<div class="gl" style="left:0;top:84px;width:1089px;height:1px"></div>
<div class="gl" style="left:0;top:105px;width:1089px;height:1px"></div>
<div class="gl" style="left:0;top:126px;width:1089px;height:1px"></div>
<div class="gl" style="left:0;top:147px;width:1089px;height:1px"></div>
<div class="gl" style="left:0;top:168px;width:1089px;height:1px"></div>
<div class="gl" style="left:0;top:189px;width:1089px;height:1px"></div>
<div class="gl" style="left:0;top:210px;width:1089px;height:1px"></div>
<div class="gl" style="left:0;top:231px;width:1089px;height:1px"></div>
<div class="gl" style="left:0;top:252px;width:1089px;height:1px"></div>
<div class="gl" style="left:0;top:273px;width:1089px;height:1px"></div>
<div class="gl" style="left:0;top:295px;width:1089px;height:1px"></div>
<div class="gl" style="left:0;top:316px;width:1089px;height:1px"></div>
<div class="gl" style="left:0;top:337px;width:1089px;height:1px"></div>
<div class="gl" style="left:0;top:358px;width:1089px;height:1px"></div>
<div class="gl" style="left:0;top:379px;width:1089px;height:1px"></div>
<div class="gl" style="left:0;top:400px;width:1089px;height:1px"></div>
<div class="gl" style="left:0;top:421px;width:1089px;height:1px"></div>
<div class="gl" style="left:0;top:442px;width:1089px;height:1px"></div>
<div class="gl" style="left:0;top:463px;width:1089px;height:1px"></div>
<div class="gl" style="left:0;top:485px;width:1089px;height:1px"></div>
<div class="gl" style="left:0;top:506px;width:1089px;height:1px"></div>
<div class="gl" style="left:0;top:527px;width:1089px;height:1px"></div>
<div class="gl" style="left:0;top:548px;width:1089px;height:1px"></div>
<div class="gl" style="left:0;top:569px;width:1089px;height:1px"></div>
<div class="gl" style="left:0;top:590px;width:1089px;height:1px"></div>
</div>
<!-- DATA TABLE -->
<div class="abs" style="left:4px;top:241px;width:237px;height:41px;background:#ffff00"></div>
<div class="abs" style="left:29px;top:241px;width:1px;height:253px;background:#000"></div>
<div class="abs" style="left:100px;top:241px;width:1px;height:253px;background:#000"></div>
<div class="abs" style="left:170px;top:241px;width:1px;height:253px;background:#000"></div>
<div class="abs" style="left:241px;top:241px;width:1px;height:253px;background:#000"></div>
<div class="abs" style="left:4px;top:282px;width:238px;height:1px;background:#000"></div>
<div class="abs" style="left:4px;top:303px;width:238px;height:1px;background:#000"></div>
<div class="abs" style="left:4px;top:325px;width:238px;height:1px;background:#000"></div>
<div class="abs" style="left:4px;top:346px;width:238px;height:1px;background:#000"></div>
<div class="abs" style="left:4px;top:367px;width:238px;height:1px;background:#000"></div>
<div class="abs" style="left:4px;top:388px;width:238px;height:1px;background:#000"></div>
<div class="abs" style="left:4px;top:409px;width:238px;height:1px;background:#000"></div>
<div class="abs" style="left:4px;top:430px;width:238px;height:1px;background:#000"></div>
<div class="abs" style="left:4px;top:451px;width:238px;height:1px;background:#000"></div>
<div class="abs" style="left:4px;top:472px;width:238px;height:1px;background:#000"></div>
<div class="abs" style="left:4px;top:493px;width:238px;height:1px;background:#000"></div>
<span class="t b" style="color: rgb(17, 17, 17); font-size: 14px; left: 47.4px; top: 245.15px; transform: scaleX(1); transform-origin: 50% 50%;">Nhân</span>
<span class="t b" style="color: rgb(17, 17, 17); font-size: 14px; left: 51.09px; top: 265.65px; transform: scaleX(0.9637); transform-origin: 50% 50%;">viên</span>
<span class="t b" style="color: rgb(17, 17, 17); font-size: 14px; left: 121.86px; top: 245.15px; transform: scaleX(0.9577); transform-origin: 50% 50%;">Sản</span>
<span class="t b" style="color: rgb(17, 17, 17); font-size: 14px; left: 116.33px; top: 265.65px; transform: scaleX(1.0176); transform-origin: 50% 50%;">phẩm</span>
<span class="t b" style="color: rgb(17, 17, 17); font-size: 14px; left: 183.52px; top: 245.15px; transform: scaleX(0.9963); transform-origin: 50% 50%;">Doanh</span>
<span class="t b" style="color: rgb(17, 17, 17); font-size: 14px; left: 194.52px; top: 265.65px; transform: scaleX(1.0108); transform-origin: 50% 50%;">thu</span>
<span class="t b" style="color: rgb(17, 17, 17); font-size: 14px; left: -3px; top: 255.65px;">o</span>
<span class="t" style="color: rgb(17, 17, 17); font-size: 13.5px; left: 33px; top: 287.47px; transform: scaleX(0.9748); transform-origin: 0px 50%;">An</span>
<span class="t" style="color: rgb(17, 17, 17); font-size: 13.5px; left: 103.6px; top: 287.47px; transform: scaleX(1.0582); transform-origin: 0px 50%;">Laptop</span>
<span class="t" style="color: rgb(17, 17, 17); font-size: 13.5px; left: 177.42px; top: 287.47px; transform: scaleX(1.0386); transform-origin: 100% 50%;">15000000</span>
<span class="t" style="color: rgb(17, 17, 17); font-size: 13.5px; left: 33px; top: 308.57px; transform: scaleX(0.9863); transform-origin: 0px 50%;">Bình</span>
<span class="t" style="color: rgb(17, 17, 17); font-size: 13.5px; left: 103.6px; top: 308.57px; transform: scaleX(1.0435); transform-origin: 0px 50%;">Chuột</span>
<span class="t" style="color: rgb(17, 17, 17); font-size: 13.5px; left: 184.94px; top: 308.57px; transform: scaleX(1.0388); transform-origin: 100% 50%;">2000000</span>
<span class="t" style="color: rgb(17, 17, 17); font-size: 13.5px; left: 33px; top: 329.67px; transform: scaleX(1.0297); transform-origin: 0px 50%;">Hoa</span>
<span class="t" style="color: rgb(17, 17, 17); font-size: 13.5px; left: 103.6px; top: 329.67px; transform: scaleX(1.0637); transform-origin: 0px 50%;">Máy in</span>
<span class="t" style="color: rgb(17, 17, 17); font-size: 13.5px; left: 184.94px; top: 329.67px; transform: scaleX(1.0388); transform-origin: 100% 50%;">8000000</span>
<span class="t" style="color: rgb(17, 17, 17); font-size: 13.5px; left: 33px; top: 350.77px; transform: scaleX(0.9853); transform-origin: 0px 50%;">Lan</span>
<span class="t" style="color: rgb(17, 17, 17); font-size: 13.5px; left: 103.6px; top: 350.77px; transform: scaleX(1.0582); transform-origin: 0px 50%;">Laptop</span>
<span class="t" style="color: rgb(17, 17, 17); font-size: 13.5px; left: 177.42px; top: 350.77px; transform: scaleX(1.0386); transform-origin: 100% 50%;">14000000</span>
<span class="t" style="color: rgb(17, 17, 17); font-size: 13.5px; left: 33px; top: 371.87px; transform: scaleX(0.9748); transform-origin: 0px 50%;">An</span>
<span class="t" style="color: rgb(17, 17, 17); font-size: 13.5px; left: 103.6px; top: 371.87px; transform: scaleX(1.0208); transform-origin: 0px 50%;">Bàn phím</span>
<span class="t" style="color: rgb(17, 17, 17); font-size: 13.5px; left: 184.94px; top: 371.87px; transform: scaleX(1.0388); transform-origin: 100% 50%;">3000000</span>
<span class="t" style="color: rgb(17, 17, 17); font-size: 13.5px; left: 33px; top: 392.97px; transform: scaleX(1.0297); transform-origin: 0px 50%;">Hoa</span>
<span class="t" style="color: rgb(17, 17, 17); font-size: 13.5px; left: 103.6px; top: 392.97px; transform: scaleX(1.0112); transform-origin: 0px 50%;">Giấy in</span>
<span class="t" style="color: rgb(17, 17, 17); font-size: 13.5px; left: 184.94px; top: 392.97px; transform: scaleX(1.0388); transform-origin: 100% 50%;">1500000</span>
<span class="t" style="color: rgb(17, 17, 17); font-size: 13.5px; left: 33px; top: 414.17px; transform: scaleX(0.9853); transform-origin: 0px 50%;">Lan</span>
<span class="t" style="color: rgb(17, 17, 17); font-size: 13.5px; left: 103.6px; top: 414.17px; transform: scaleX(1.0435); transform-origin: 0px 50%;">Chuột</span>
<span class="t" style="color: rgb(17, 17, 17); font-size: 13.5px; left: 184.94px; top: 414.17px; transform: scaleX(1.0388); transform-origin: 100% 50%;">2500000</span>
<span class="t" style="color: rgb(17, 17, 17); font-size: 13.5px; left: 33px; top: 435.27px; transform: scaleX(0.9863); transform-origin: 0px 50%;">Bình</span>
<span class="t" style="color: rgb(17, 17, 17); font-size: 13.5px; left: 103.6px; top: 435.27px; transform: scaleX(1.0582); transform-origin: 0px 50%;">Laptop</span>
<span class="t" style="color: rgb(17, 17, 17); font-size: 13.5px; left: 177.42px; top: 435.27px; transform: scaleX(1.0386); transform-origin: 100% 50%;">16000000</span>
<span class="t" style="color: rgb(17, 17, 17); font-size: 13.5px; left: 33px; top: 456.37px; transform: scaleX(1.0763); transform-origin: 0px 50%;">Minh</span>
<span class="t" style="color: rgb(17, 17, 17); font-size: 13.5px; left: 103.6px; top: 456.37px; transform: scaleX(1.0637); transform-origin: 0px 50%;">Máy in</span>
<span class="t" style="color: rgb(17, 17, 17); font-size: 13.5px; left: 184.94px; top: 456.37px; transform: scaleX(1.0388); transform-origin: 100% 50%;">9000000</span>
<span class="t" style="color: rgb(17, 17, 17); font-size: 13.5px; left: 33px; top: 477.47px; transform: scaleX(0.9853); transform-origin: 0px 50%;">Lan</span>
<span class="t" style="color: rgb(17, 17, 17); font-size: 13.5px; left: 103.6px; top: 477.47px; transform: scaleX(1.0208); transform-origin: 0px 50%;">Bàn phím</span>
<span class="t" style="color: rgb(17, 17, 17); font-size: 13.5px; left: 184.94px; top: 477.47px; transform: scaleX(1.0388); transform-origin: 100% 50%;">2800000</span>
<!-- PIVOT TABLE -->
<div class="abs" style="left:453px;top:241px;width:229px;height:41px;background:#d9e1f2;border-bottom:1px solid #9db5e0"></div>
<div class="abs" style="left:453px;top:304px;width:229px;height:22px;background:#d9e1f2;border-bottom:1px solid #9db5e0"></div>
<div class="abs" style="left:453px;top:430px;width:229px;height:21px;background:#d9e1f2;border-top:1px solid #9db5e0"></div>
<div class="abs" style="left:453px;top:326px;width:229px;height:104px;background:#fff"></div>
<span class="t" style="color: rgb(17, 17, 17); font-size: 13.5px; left: 456px; top: 267.37px; transform: scaleX(1.0029); transform-origin: 0px 50%;">Phòng ban</span>
<span class="t" style="color: rgb(17, 17, 17); font-size: 13.5px; left: 555px; top: 267.37px; transform: scaleX(1.0417); transform-origin: 0px 50%;">(All)</span>
<div class="abs" style="left:664px;top:264px;width:17px;height:18px;background:#f8f8f8;border:1px solid #b8b8b8"></div>
<svg class="abs" style="left:668px;top:271px" width="9" height="6" viewBox="0 0 9 6"><path d="M1 0.500 h7 l-3.500 3.800 z" fill="#707070"></path></svg>
<svg class="abs" style="left:448px;top:300px" width="110" height="30" viewBox="448 300 110 30"><rect x="451.800" y="303.200" width="100.600" height="22.100" fill="none" stroke="#217346" stroke-width="1.700"></rect></svg>
<div class="abs" style="left:549px;top:323px;width:6px;height:6px;background:#217346;border:1px solid #fff"></div>
<span class="t b" style="color: rgb(17, 17, 17); font-size: 14px; left: 456px; top: 308.15px; transform: scaleX(0.9383); transform-origin: 0px 50%;">Row Labels</span>
<div class="abs" style="left:534px;top:307px;width:16px;height:16px;background:#f6f6f6;border:1px solid #b0b0b0"></div>
<svg class="abs" style="left:538px;top:313px" width="9" height="6" viewBox="0 0 9 6"><path d="M1 0.500 h7 l-3.500 3.800 z" fill="#707070"></path></svg>
<span class="t b" style="color: rgb(17, 17, 17); font-size: 14px; left: 556px; top: 308.15px; transform: scaleX(0.9955); transform-origin: 0px 50%;">Sum of Doanh thu</span>
<span class="t" style="color: rgb(17, 17, 17); font-size: 13.5px; left: 456px; top: 329.67px; transform: scaleX(0.9748); transform-origin: 0px 50%;">An</span>
<span class="t" style="color: rgb(17, 17, 17); font-size: 13.5px; left: 618.92px; top: 329.67px; transform: scaleX(1.0386); transform-origin: 100% 50%;">18000000</span>
<span class="t" style="color: rgb(17, 17, 17); font-size: 13.5px; left: 456px; top: 350.77px; transform: scaleX(0.9863); transform-origin: 0px 50%;">Bình</span>
<span class="t" style="color: rgb(17, 17, 17); font-size: 13.5px; left: 618.92px; top: 350.77px; transform: scaleX(1.0386); transform-origin: 100% 50%;">18000000</span>
<span class="t" style="color: rgb(17, 17, 17); font-size: 13.5px; left: 456px; top: 371.87px; transform: scaleX(1.0297); transform-origin: 0px 50%;">Hoa</span>
<span class="t" style="color: rgb(17, 17, 17); font-size: 13.5px; left: 626.44px; top: 371.87px; transform: scaleX(1.0388); transform-origin: 100% 50%;">9500000</span>
<span class="t" style="color: rgb(17, 17, 17); font-size: 13.5px; left: 456px; top: 392.97px; transform: scaleX(0.9853); transform-origin: 0px 50%;">Lan</span>
<span class="t" style="color: rgb(17, 17, 17); font-size: 13.5px; left: 618.92px; top: 392.97px; transform: scaleX(1.0386); transform-origin: 100% 50%;">19300000</span>
<span class="t" style="color: rgb(17, 17, 17); font-size: 13.5px; left: 456px; top: 414.17px; transform: scaleX(1.0763); transform-origin: 0px 50%;">Minh</span>
<span class="t" style="color: rgb(17, 17, 17); font-size: 13.5px; left: 626.44px; top: 414.17px; transform: scaleX(1.0388); transform-origin: 100% 50%;">9000000</span>
<span class="t b" style="color: rgb(17, 17, 17); font-size: 14px; left: 456px; top: 434.85px; transform: scaleX(0.9867); transform-origin: 0px 50%;">Grand Total</span>
<span class="t b" style="color: rgb(17, 17, 17); font-size: 14px; left: 616.7px; top: 434.85px; transform: scaleX(1.0033); transform-origin: 100% 50%;">73800000</span>
<!-- VERTICAL SCROLLBAR -->
<div class="abs" style="left:1094px;top:220px;width:22px;height:626px;background:#e6e6e6"></div>
<div class="abs" style="left:1096px;top:238px;width:16px;height:592px;background:#f0f0f0"></div>
<div class="abs" style="left:1096px;top:222px;width:16px;height:17px;background:#fff;border:1px solid #ababab"></div>
<svg class="abs" style="left:1099.500px;top:227px" width="9" height="6" viewBox="0 0 9 6"><path d="M0.500 5.500 h8 l-4 -4.500 z" fill="#222"></path></svg>
<div class="abs" style="left:1096px;top:238px;width:16px;height:569px;background:#fff;border:1px solid #ababab"></div>
<div class="abs" style="left:1096px;top:830px;width:16px;height:16px;background:#fff;border:1px solid #ababab"></div>
<svg class="abs" style="left:1099.500px;top:835px" width="9" height="6" viewBox="0 0 9 6"><path d="M0.500 0.500 h8 l-4 4.500 z" fill="#222"></path></svg>
<!-- SHEET TAB BAR -->
<div id="tabbar"></div>
<div class="abs" style="left:4px;top:846px;width:1089px;height:1px;background:#cdcdcd"></div>
<svg class="abs" style="left:10.800px;top:850.800px" width="19" height="19" viewBox="0 0 19 19"><circle cx="9.500" cy="9.500" r="8.200" fill="none" stroke="#7a7a7a" stroke-width="1.200"></circle><path d="M9.500 5 v9 M5 9.500 h9" stroke="#7a7a7a" stroke-width="1.300"></path></svg>
<div class="abs" style="left:592px;top:854.500px;width:2.400px;height:2.400px;background:#9a9a9a;box-shadow:0 4.400px 0 #9a9a9a,0 8.800px 0 #9a9a9a"></div>
<div class="abs" style="left:610px;top:852px;width:483px;height:16px;background:#f0f0f0"></div>
<div class="abs" style="left:609px;top:852px;width:18px;height:17px;background:#fff;border:1px solid #ababab"></div>
<svg class="abs" style="left:614px;top:855.500px" width="6" height="9" viewBox="0 0 6 9"><path d="M5.500 0.500 v8 l-4.500 -4 z" fill="#222"></path></svg>
<div class="abs" style="left:626px;top:852px;width:420px;height:17px;background:#fff;border:1px solid #ababab"></div>
<div class="abs" style="left:1076px;top:852px;width:17px;height:17px;background:#fff;border:1px solid #ababab"></div>
<svg class="abs" style="left:1082px;top:856px" width="6" height="9" viewBox="0 0 6 9"><path d="M0.500 0.500 v8 l4.500 -4 z" fill="#222"></path></svg>
<!-- STATUS BAR -->
<div id="status"></div>
<span class="t" style="color: rgb(58, 58, 58); font-size: 11px; left: -2.5px; top: 880.99px; transform: scaleX(1.1114); transform-origin: 0px 50%;">Good to go</span>
<div class="abs" style="left:1172px;top:875px;width:44px;height:21px;background:#c6c6c6"></div>
<svg class="abs" style="left:1180px;top:876px" width="120" height="20" viewBox="1180 876 120 20" fill="none" stroke="#6f6f6f" stroke-width="1">
  <rect x="1187.500" y="879.500" width="13" height="13"></rect><path d="M1191.800 879.500 v13 M1196.200 879.500 v13 M1187.500 883.800 h13 M1187.500 888.200 h13"></path>
  <rect x="1230.500" y="879.500" width="15" height="12"></rect><rect x="1234.500" y="881.500" width="7" height="8"></rect><path d="M1236.500 884 h3 M1236.500 885.800 h3 M1236.500 887.500 h3" stroke-width="0.800"></path>
  <rect x="1274.500" y="879.500" width="15" height="13"></rect><path d="M1278.500 879.500 V887.500 M1283.500 879.500 V887.500 M1274.500 887.500 H1283.500"></path>
</svg>
<div class="abs" style="left:1310px;top:885px;width:9px;height:1px;background:#444"></div>
<div class="abs" style="left:1324px;top:885px;width:111px;height:1px;background:#6a6a6a"></div>
<div class="abs" style="left:1377px;top:880px;width:6px;height:12px;background:#555"></div>
<div class="abs" style="left:1439px;top:885px;width:9px;height:1px;background:#444"></div>
<div class="abs" style="left:1443px;top:881px;width:1px;height:9px;background:#444"></div>
<span class="t" style="color: rgb(58, 58, 58); font-size: 11px; left: 1463px; top: 880.69px; transform: scaleX(0.995); transform-origin: 0px 50%;">100%</span>
<!-- WATERMARK LOGO -->
<svg class="abs" style="left:20px;top:765px" width="350" height="65" viewBox="20 765 350 65">
  <polygon points="28.2,771.400 38.450,771.400 52.540,793.900 66.270,771.400 91.560,771.400 59.400,823.900 54.700,815.600 76,780.200 71.300,780.200 52.540,810.900" fill="#ec1c27"></polygon>
  <polygon points="43.500,771.400 53.620,771.400 59.800,780.900 54.700,789.600" fill="#ec1c27"></polygon>
  <polygon points="53.620,771.400 59.800,780.900 54.700,789.600 49.100,778.700" fill="#d11f2a"></polygon>
  <polygon points="110.00,804.00 117.60,788.20 121.60,788.20 129.20,804.00 125.20,804.00 119.60,792.80 114.00,804.00" fill="#ec1c27"></polygon><rect x="116.20" y="795" width="5.40" height="2.40" fill="#ec1c27"></rect>
  <polygon points="169.00,804.00 176.30,788.20 180.30,788.20 187.60,804.00 183.60,804.00 178.30,792.80 173.00,804.00" fill="#ec1c27"></polygon><rect x="174.90" y="795" width="5.40" height="2.40" fill="#ec1c27"></rect>
  <g fill="none" stroke="#ec1c27" stroke-width="3.500" stroke-linejoin="round">
    <path d="M89.500 789.95 H103.300 Q107 789.95 107 793.6500000000001 V798.55 Q107 802.25 103.300 802.25 H91.250 V794.300" stroke-linejoin="miter"></path>
    <rect x="131.750" y="789.95" width="16" height="12.30" rx="3.400"></rect>
    <path d="M151.500 789.95 H170.300 M161 789.95 V804" stroke-linejoin="miter"></path>
    <rect x="190.750" y="789.95" width="15.500" height="12.30" rx="3.400"></rect>
    <path d="M209 789.95 H228.600 M219.300 789.95 V804" stroke-linejoin="miter"></path>
    <path d="M232.600 788.200 V790.900 M232.600 792.900 V804" stroke-width="3.700"></path>
    <path d="M238.250 804 V792.900 M238.250 788.200 V790.900 M253.750 788.200 V804"></path>
    <path d="M259.750 788.200 V804 M275.400 788.200 V804 M259.750 796 H275.400"></path>
    <rect x="280.750" y="789.95" width="17.500" height="12.30" rx="3.400"></rect>
    <path d="M319.500 789.95 H307.200 Q303.750 789.95 303.750 793.5500000000001 V798.65 Q303.750 802.25 307.200 802.25 H319.500"></path>
  </g>
  <polygon points="236.500,788.200 240.600,788.200 255.500,801 255.500,804 251.500,804 236.500,791.200" fill="#ec1c27"></polygon>
  <g fill="none" stroke="#a30f1d" stroke-width="3.500">
    <path d="M345.750 804 V792.900 M345.750 788.200 V790.900 M361.250 788.200 V804"></path>
  </g>
  <polygon points="344,788.200 348.100,788.200 363,801 363,804 359,804 344,791.200" fill="#a30f1d"></polygon>
  <polygon points="324,788.200 328.200,788.200 333,799.500 337.800,788.200 342,788.200 335.200,804 330.800,804" fill="#a30f1d"></polygon>
  <rect x="321.300" y="800.400" width="3.600" height="3.600" fill="#a30f1d"></rect>
</svg>
<!-- PIVOTTABLE FIELDS PANEL -->
<div id="panel"></div>
<div class="abs" style="left:1115px;top:222px;width:1px;height:650px;background:#b9b9b9"></div>
<span class="t" style="color: rgb(74, 74, 74); font-size: 23px; left: 1129.2px; top: 234.53px; transform: scaleX(0.9778); transform-origin: 0px 50%;">PivotTable Fields</span>
<svg class="abs" style="left:1422px;top:238px" width="18" height="12" viewBox="0 0 18 12"><path d="M1.500 1.500 L9 9.500 L16.500 1.500" fill="none" stroke="#444" stroke-width="1.200"></path></svg>
<svg class="abs" style="left:1469px;top:237px" width="14" height="14" viewBox="0 0 14 14"><path d="M1.500 1.500 L12.500 12.500 M12.500 1.500 L1.500 12.500" stroke="#444" stroke-width="1.200"></path></svg>
<span class="t" style="color: rgb(58, 58, 58); font-size: 13px; left: 1130.3px; top: 278.7px; transform: scaleX(1.026); transform-origin: 0px 50%;">Choose fields to add to report:</span>
<div class="abs" style="left:1438px;top:269px;width:50px;height:31px;background:#fff;border:1px solid #ababab"></div>
<svg class="abs" style="left:1449px;top:276px" width="17" height="17" viewBox="0 0 17 17">
  <g fill="#999"><circle cx="8.700" cy="8" r="5.100"></circle>
  <rect x="1.700" y="6.200" width="14" height="3.600" rx="0.800"></rect>
  <rect x="1.700" y="6.200" width="14" height="3.600" rx="0.800" transform="rotate(60 8.700 8)"></rect>
  <rect x="1.700" y="6.200" width="14" height="3.600" rx="0.800" transform="rotate(-60 8.700 8)"></rect></g>
  <circle cx="8.700" cy="8" r="2.700" fill="#fff"></circle>
</svg>
<svg class="abs" style="left:1474px;top:282px" width="9" height="6" viewBox="0 0 9 6"><path d="M0.500 0.500 h8 l-4 4.500 z" fill="#333"></path></svg>
<div class="abs" style="left:1129px;top:314px;width:359px;height:27px;background:#fff;border:1px solid #d2d2d2"></div>
<span class="t" style="color: rgb(118, 118, 118); font-size: 13px; left: 1136.2px; top: 320.3px; transform: scaleX(0.9223); transform-origin: 0px 50%;">Search</span>
<svg class="abs" style="left:1464px;top:317px" width="22" height="21" viewBox="0 0 22 21"><circle cx="13.500" cy="8" r="5.700" fill="none" stroke="#555" stroke-width="1.300"></circle><path d="M9.500 12 L2 19.500" stroke="#555" stroke-width="1.600"></path></svg>
<div class="abs" style="left:1129px;top:358px;width:359px;height:189px;background:#fff;border:1px solid #ababab"></div>

<div class="abs" style="left:1133.500px;top:362px;width:14px;height:14px;background:#fff;border:1px solid #ababab"></div>
<span class="t" style="color: rgb(58, 58, 58); font-size: 13px; left: 1153.6px; top: 365px; transform: scaleX(1.0211); transform-origin: 0px 50%;">Ngày</span>
<div class="abs" style="left:1133.500px;top:386px;width:14px;height:14px;background:#217346"></div>
<svg class="abs" style="left:1133.500px;top:386px" width="14" height="14" viewBox="0 0 14 14"><path d="M3.300 7 L5.800 9.500 L10.700 4.500" fill="none" stroke="#fff" stroke-width="1.200"></path></svg>
<span class="t b" style="color: rgb(34, 34, 34); font-size: 13px; left: 1153.6px; top: 388.7px; transform: scaleX(0.9781); transform-origin: 0px 50%;">Phòng ban</span>
<div class="abs" style="left:1133.500px;top:409px;width:14px;height:14px;background:#217346"></div>
<svg class="abs" style="left:1133.500px;top:409px" width="14" height="14" viewBox="0 0 14 14"><path d="M3.300 7 L5.800 9.500 L10.700 4.500" fill="none" stroke="#fff" stroke-width="1.200"></path></svg>
<span class="t b" style="color: rgb(34, 34, 34); font-size: 13px; left: 1153.6px; top: 412.5px; transform: scaleX(1.0012); transform-origin: 0px 50%;">Nhân viên</span>
<div class="abs" style="left:1133.500px;top:433px;width:14px;height:14px;background:#fff;border:1px solid #ababab"></div>
<span class="t" style="color: rgb(58, 58, 58); font-size: 13px; left: 1153.6px; top: 436.3px; transform: scaleX(0.9786); transform-origin: 0px 50%;">Sản phẩm</span>
<div class="abs" style="left:1133.500px;top:457px;width:14px;height:14px;background:#217346"></div>
<svg class="abs" style="left:1133.500px;top:457px" width="14" height="14" viewBox="0 0 14 14"><path d="M3.300 7 L5.800 9.500 L10.700 4.500" fill="none" stroke="#fff" stroke-width="1.200"></path></svg>
<span class="t b" style="color: rgb(34, 34, 34); font-size: 13px; left: 1153.6px; top: 460px; transform: scaleX(1.0114); transform-origin: 0px 50%;">Doanh thu</span>
<span class="t" style="color: rgb(58, 58, 58); font-size: 13px; left: 1133px; top: 484.7px; transform: scaleX(0.9789); transform-origin: 0px 50%;">More Tables...</span>

<div class="abs" style="left:1131px;top:564px;width:359px;height:1px;border-top:1px dotted #b8b8b8"></div>
<span class="t" style="color: rgb(58, 58, 58); font-size: 13px; left: 1133.8px; top: 570.9px; transform: scaleX(1.0133); transform-origin: 0px 50%;">Drag fields between areas below:</span>
<div class="abs" style="left:1310px;top:604px;width:1px;height:210px;background:#c6c6c6"></div>
<div class="abs" style="left:1132px;top:708px;width:356px;height:1px;background:#c6c6c6"></div>

<svg class="abs" style="left:1136px;top:607px" width="15" height="14" viewBox="0 0 15 14"><path d="M1 1 H14 L9 6.500 V13 L6 11 V6.500 z" fill="#8a8a8a"></path></svg>
<span class="t" style="color: rgb(58, 58, 58); font-size: 13px; left: 1157.5px; top: 608.2px; transform: scaleX(0.9748); transform-origin: 0px 50%;">Filters</span>
<svg class="abs" style="left:1317px;top:607px" width="12" height="12" viewBox="0 0 12 12"><path d="M1.500 1 v10" stroke="#8a8a8a" stroke-width="2.600"></path><path d="M5.500 1 v10 M9 1 v10" stroke="#a0a0a0" stroke-width="1.600"></path></svg>
<span class="t" style="color: rgb(58, 58, 58); font-size: 13px; left: 1337px; top: 608.2px; transform: scaleX(0.9747); transform-origin: 0px 50%;">Columns</span>
<div class="abs" style="left:1133px;top:627px;width:170px;height:75px;background:#fff"></div>
<div class="abs" style="left:1312px;top:627px;width:176px;height:75px;background:#fff"></div>
<div class="abs" style="left:1133.500px;top:629px;width:169px;height:23px;background:#fff;border:1px solid #b8b8b8"></div>
<span class="t" style="color: rgb(58, 58, 58); font-size: 13px; left: 1141.6px; top: 634.2px; transform: scaleX(0.9888); transform-origin: 0px 50%;">Phòng ban</span>
<svg class="abs" style="left:1283px;top:638px" width="10" height="6" viewBox="0 0 10 6"><path d="M0.500 0.500 h9 l-4.500 5 z" fill="#222"></path></svg>

<svg class="abs" style="left:1136px;top:719px" width="14" height="11" viewBox="0 0 14 11"><path d="M1 2 h12" stroke="#8a8a8a" stroke-width="2.400"></path><path d="M1 5.500 h12 M1 8.500 h12" stroke="#a0a0a0" stroke-width="1.400"></path></svg>
<span class="t" style="color: rgb(58, 58, 58); font-size: 13px; left: 1157.5px; top: 719px; transform: scaleX(0.9442); transform-origin: 0px 50%;">Rows</span>
<svg class="abs" style="left:1317px;top:718px" width="12" height="12" viewBox="0 0 12 12"><path d="M10.500 3 V1 H1.500 L6.500 6 L1.500 11 H10.500 V9" fill="none" stroke="#8a8a8a" stroke-width="1.200"></path></svg>
<span class="t" style="color: rgb(58, 58, 58); font-size: 13px; left: 1337px; top: 719px; transform: scaleX(0.9743); transform-origin: 0px 50%;">Values</span>
<div class="abs" style="left:1133px;top:738px;width:170px;height:76px;background:#fff"></div>
<div class="abs" style="left:1312px;top:738px;width:176px;height:76px;background:#fff"></div>
<div class="abs" style="left:1133.500px;top:740px;width:169px;height:23px;background:#fff;border:1px solid #b8b8b8"></div>
<span class="t" style="color: rgb(58, 58, 58); font-size: 13px; left: 1141.6px; top: 745px; transform: scaleX(0.9821); transform-origin: 0px 50%;">Nhân viên</span>
<svg class="abs" style="left:1283px;top:749px" width="10" height="6" viewBox="0 0 10 6"><path d="M0.500 0.500 h9 l-4.500 5 z" fill="#222"></path></svg>
<div class="abs" style="left:1313px;top:740px;width:175px;height:23px;background:#fff;border:1px solid #b8b8b8"></div>
<span class="t" style="color: rgb(58, 58, 58); font-size: 13px; left: 1320.8px; top: 745px; transform: scaleX(1.0086); transform-origin: 0px 50%;">Sum of Doanh thu</span>
<svg class="abs" style="left:1468px;top:749px" width="10" height="6" viewBox="0 0 10 6"><path d="M0.500 0.500 h9 l-4.500 5 z" fill="#222"></path></svg>

<div class="abs" style="left:1136px;top:842px;width:14px;height:14px;background:#fff;border:1px solid #8a8a8a"></div>
<span class="t" style="color: rgb(58, 58, 58); font-size: 13px; left: 1157.5px; top: 843.4px; transform: scaleX(1.0111); transform-origin: 0px 50%;">Defer Layout Update</span>
<div class="abs" style="left:1433px;top:835px;width:55px;height:28px;background:#fff;border:1px solid #dcdcdc"></div>
<span class="t" style="color: rgb(196, 196, 196); font-size: 13px; left: 1439.4px; top: 843.4px; transform: scaleX(1.0162); transform-origin: 0px 50%;">Update</span>
<span class="t serif" style="color: rgb(17, 17, 17); font-size: 29px; left: 1410px; top: 810.83px; transform: scaleX(1.023); transform-origin: 0px 50%;">200</span>
<!-- thin light window edge (inner-white) -->
<div class="abs" style="left:4px;top:847px;width:1px;height:49px;background:#f6f6f6"></div>
<div class="abs" style="left:1495px;top:71px;width:1px;height:825px;background:#fafafa"></div>
<div class="abs" style="left:4px;top:895px;width:1492px;height:1px;background:#fafafa"></div>
<!-- window frame (black screenshot border) -->
<div class="abs" style="left:0;top:0;width:4px;height:900px;background:#000"></div>
<div class="abs" style="left:0;top:0;width:1500px;height:4px;background:#000"></div>
<div class="abs" style="left:1496px;top:0;width:4px;height:900px;background:#000"></div>
<div class="abs" style="left:0;top:896px;width:1500px;height:4px;background:#000"></div>


</body></html>
